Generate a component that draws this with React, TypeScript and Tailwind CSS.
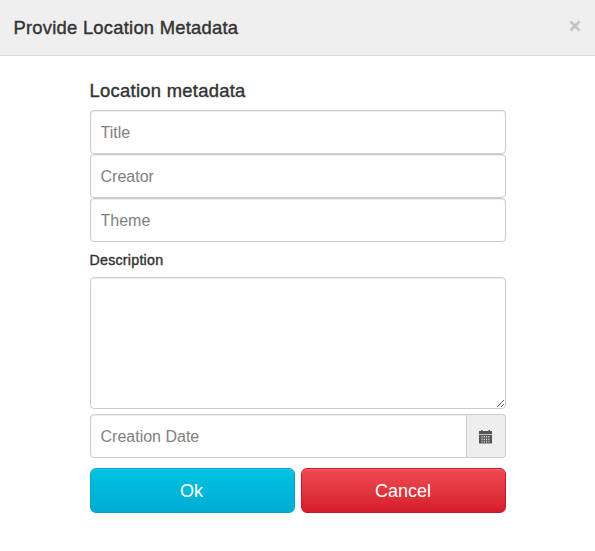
import React from "react";

const inputClass =
  "block h-[44px] w-full rounded-[4px] border border-[#ccc] bg-white px-[9.5px] pt-[2px] text-[16px] leading-[22px] text-[#555] shadow-[inset_0_1px_1px_rgba(0,0,0,0.075)] outline-none placeholder:text-[#808080] placeholder:opacity-100";

function CalendarIcon() {
  return (
    <svg width="13" height="14" viewBox="0 0 13 14" fill="#555" className="mt-px mr-[2px]">
      <path d="M0 1h2V0h1.5v1h6V0H11v1h2v3.3H0z" />
      <path
        fillRule="evenodd"
        d="M0 5h13v8.6H0zM2.5 6v1.6h1V6zm2.3 0v1.6h1V6zm2.3 0v1.6h1V6zm2.3 0v1.6h1V6zM2.5 8.6v1.6h1V8.6zm2.3 0v1.6h1V8.6zm2.3 0v1.6h1V8.6zm2.3 0v1.6h1V8.6zM2.5 11.2v1.4h1v-1.4zm2.3 0v1.4h1v-1.4zm2.3 0v1.4h1v-1.4zm2.3 0v1.4h1v-1.4z"
      />
    </svg>
  );
}

export default function App() {
  return (
    <div className="h-[551px] w-[595px] overflow-hidden bg-white font-['Liberation_Sans',Arial,sans-serif] text-[#333]">
      <header className="flex h-[56px] items-center justify-between border-b border-[#ddd] bg-[#efefef] pr-[14px] pl-[13.5px]">
        <h3 className="text-[18.4px] leading-[24px] tracking-[0.24px] [-webkit-text-stroke:0.4px_#333]">Provide Location Metadata</h3>
        <button aria-label="Close" className="text-[#c4c4c4]">
          <svg width="12" height="12" viewBox="0 0 12 12" className="-mt-[3px]" stroke="currentColor" strokeWidth="2.7">
            <path d="M1.5 1.5l9 9M10.5 1.5l-9 9" />
          </svg>
        </button>
      </header>
      <form className="ml-[90px] w-[416px] pt-[24px]">
        <h4 className="-ml-[0.5px] h-[30px] text-[18.4px] leading-[22px] tracking-[0.28px] [-webkit-text-stroke:0.4px_#333]">Location metadata</h4>
        <input className={inputClass} placeholder="Title" />
        <input className={inputClass} placeholder="Creator" />
        <input className={inputClass} placeholder="Theme" />
        <label className="-ml-[0.5px] block h-[35px] pt-[8px] text-[14.2px] leading-[20px] tracking-[0.26px] [-webkit-text-stroke:0.4px_#333]">Description</label>
        <textarea className="block h-[132px] w-full resize rounded-[4px] border border-[#ccc] bg-white shadow-[inset_0_1px_1px_rgba(0,0,0,0.075)] outline-none" />
        <div className="mt-[5px] flex h-[44px]">
          <input className={inputClass + " min-w-0 flex-1 rounded-r-none"} placeholder="Creation Date" />
          <span className="flex w-[39px] items-center justify-center rounded-r-[4px] border border-l-0 border-[#ccc] bg-[#eee]">
            <CalendarIcon />
          </span>
        </div>
        <div className="mt-[10px] flex gap-[6px] text-[18px] text-white [text-shadow:0_-1px_0_rgba(0,0,0,0.2)]">
          <button type="button" className="h-[45px] w-[205px] rounded-[6px] border border-[#00a5c6] bg-linear-to-b from-[#00c3e0] to-[#00acd2] pt-[2px] pr-[2px] shadow-[inset_0_1px_0_rgba(255,255,255,0.15)]">
            Ok
          </button>
          <button type="button" className="h-[45px] w-[205px] rounded-[6px] border border-[#c41927] bg-linear-to-b from-[#ee4a52] to-[#d51c2b] pt-[2px] pr-px shadow-[inset_0_1px_0_rgba(255,255,255,0.15)]">
            Cancel
          </button>
        </div>
      </form>
    </div>
  );
}
